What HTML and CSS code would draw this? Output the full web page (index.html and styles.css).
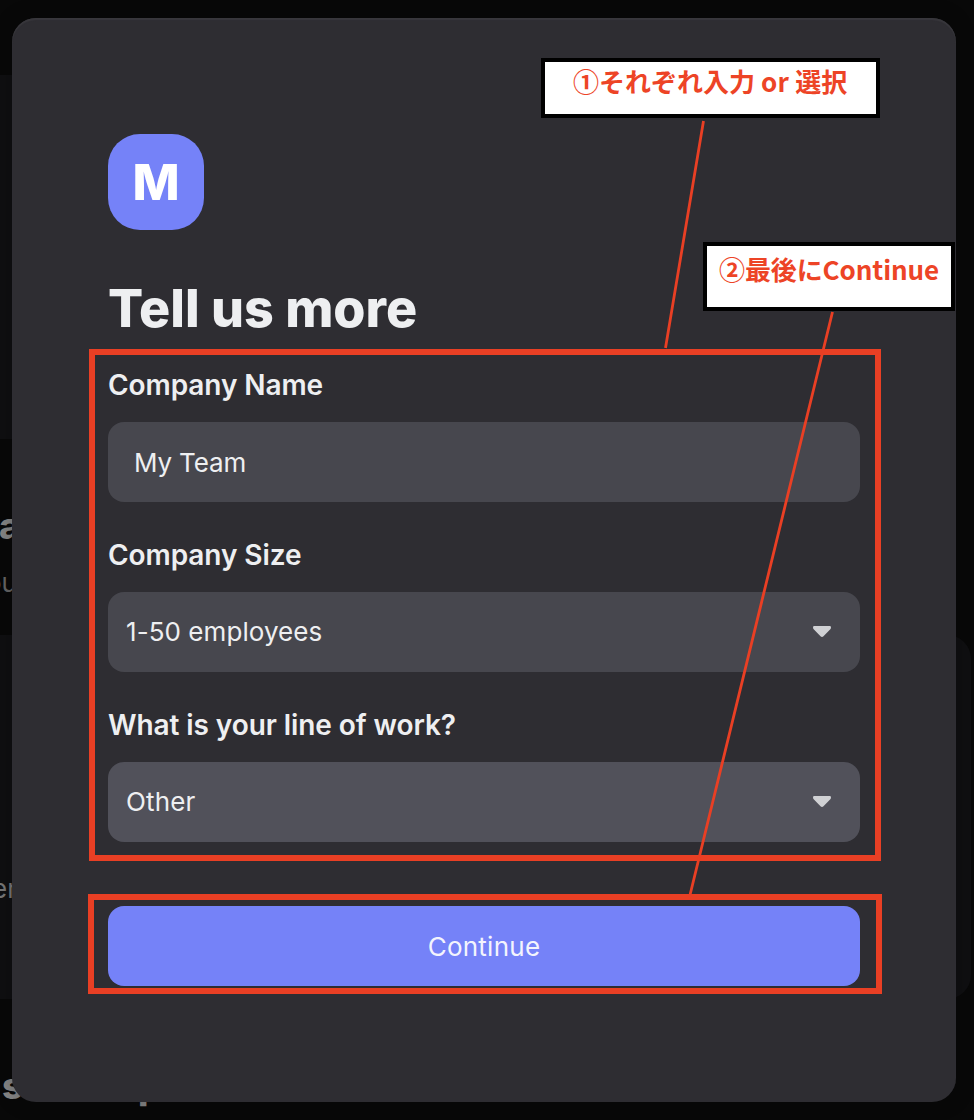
FILE: index.html
```
<!DOCTYPE html>
<html lang="ja">
<head>
<meta charset="utf-8">
<title>Tell us more</title>
<link rel="stylesheet" href="styles.css">
</head>
<body>
<div class="screen">
  <div class="backdrop" aria-hidden="true">
    <div class="band band-top"></div>
    <div class="band band-card"></div>
    <span class="peek peek-a">a</span>
    <span class="peek peek-ou">ou</span>
    <span class="peek peek-er">er</span>
    <span class="peek peek-s">s</span>
    <span class="peek peek-p">p</span>
  </div>
  <main class="modal">
    <div class="logo">M</div>
    <h1 class="title">Tell us more</h1>
    <form class="form">
      <label class="label">Company Name</label>
      <div class="field field-input">My Team</div>
      <label class="label">Company Size</label>
      <div class="field"><span>1-50 employees</span>
        <svg class="caret" viewBox="0 0 18 11"><path d="M1.2 0H16.8Q18 0 18 1.4Q18 2.5 17.3 3.3L10.5 10.2Q9 11.8 7.5 10.2L.7 3.3Q0 2.5 0 1.4Q0 0 1.2 0Z"/></svg>
      </div>
      <label class="label">What is your line of work?</label>
      <div class="field field-active"><span>Other</span>
        <svg class="caret" viewBox="0 0 18 11"><path d="M1.2 0H16.8Q18 0 18 1.4Q18 2.5 17.3 3.3L10.5 10.2Q9 11.8 7.5 10.2L.7 3.3Q0 2.5 0 1.4Q0 0 1.2 0Z"/></svg>
      </div>
      <button class="continue" type="button">Continue</button>
    </form>
  </main>
  <div class="frame frame-form"></div>
  <div class="frame frame-button"></div>
  <svg class="lines" viewBox="0 0 974 1120">
    <path d="M703.5 121L665.5 348M832.5 312L690 895"/>
  </svg>
  <div class="note note-one"><span>①それぞれ入力<span class="or"> or </span>選択</span></div>
  <div class="note note-two"><span>②最後にContinue</span></div>
</div>
</body>
</html>
```
FILE: styles.css
```
* { box-sizing: border-box; }
body { margin: 0; font-family: Inter, "Liberation Sans", sans-serif; }
.screen { position: relative; width: 974px; height: 1120px; padding: 18px 18px 18px 12px; overflow: hidden; background: #080808; }

/* Dimmed page behind the dialog */
.backdrop { position: absolute; inset: 0; }
.band { position: absolute; background: #0f0f11; height: 364px; }
.band-top { left: 0; top: 75px; width: 500px; }
.band-card { left: -40px; top: 635px; width: 1011px; border-radius: 24px; }
.peek { position: absolute; color: #858585; line-height: 40px; white-space: nowrap; }
.peek-a { left: -1px; top: 506px; font-size: 37px; font-weight: 800; }
.peek-ou { right: 957px; top: 563px; font-size: 26px; color: #656565; }
.peek-er { right: 957px; top: 869px; font-size: 26px; color: #777; }
.peek-s { left: 2px; top: 1066px; font-size: 37px; font-weight: 800; }
.peek-p { left: 138px; top: 1066px; font-size: 37px; font-weight: 800; }

.modal { position: relative; width: 944px; height: 1084px; padding: 116px 96px; border-radius: 24px; background: #2e2d32; box-shadow: inset 0 2px 1px #38373c, 0 0 20px rgba(0,0,0,.25); }
.logo { width: 96px; height: 96px; border-radius: 32px; background: #7582f8; color: #fff; font-size: 50px; font-weight: 800; line-height: 96px; text-align: center; }
.title { margin: 47px 0 0; color: #eeeff1; font-size: 52px; font-weight: 800; line-height: 64px; letter-spacing: -.03px; white-space: nowrap; }
.form { display: flex; flex-direction: column; padding-top: 27px; }
.label { height: 54px; color: #eeeff1; font-size: 28px; font-weight: 600; line-height: 34px; letter-spacing: -.08px; }
.field { display: flex; align-items: center; justify-content: space-between; height: 80px; margin-bottom: 36px; padding: 0 29px 2px 18px; border-radius: 16px; background: #47474e; color: #eeeff1; font-size: 26px; letter-spacing: .06px; }
.field-input { padding-left: 26px; padding-bottom: 0; letter-spacing: -.15px; }
.field-active { background: #51515a; margin-bottom: 64px; letter-spacing: .15px; }
.caret { width: 18px; height: 11px; fill: #d0d1d4; }
.continue { height: 80px; border: 0; border-radius: 16px; background: #7582f8; color: #f3f4fd; font: 400 26px Inter, sans-serif; letter-spacing: .25px; padding: 0; }

/* Callouts over the dialog */
.frame { position: absolute; border: 6px solid #e93f24; }
.frame-form { left: 89px; top: 349px; width: 792px; height: 512px; }
.frame-button { left: 88px; top: 894px; width: 794px; height: 100px; }
.lines { position: absolute; left: 0; top: 0; width: 974px; height: 1120px; fill: none; stroke: #e93f24; stroke-width: 2.8; }
.note { position: absolute; border: 4px solid #000; background: #fff; color: #ed4426; font-family: "Noto Sans CJK JP", sans-serif; font-size: 26px; font-weight: 600; line-height: 38px; white-space: nowrap; }
.note-one { left: 541px; top: 58px; width: 339px; height: 60px; padding-left: 28px; }
.or { letter-spacing: .2px; }
.note-two { left: 703px; top: 242px; width: 252px; height: 69px; padding: 4px 0 0 12px; letter-spacing: -.1px; }
```
